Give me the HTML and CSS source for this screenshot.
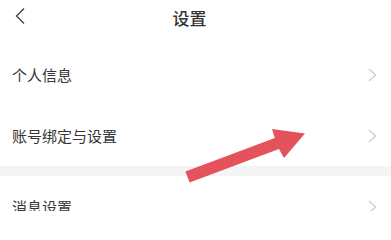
FILE: index.html
```html
<!DOCTYPE html>
<html lang="zh-CN">
<head>
<meta charset="utf-8">
<title>设置</title>
<link rel="stylesheet" href="styles.css">
</head>
<body>
<div class="page">
  <header class="topbar">
    <span class="back">
      <svg width="12" height="18" viewBox="0 0 12 18"><polyline points="10,1.5 2.5,9 10,16.5" fill="none" stroke="#4a4a4a" stroke-width="1.5" stroke-linejoin="miter"/></svg>
    </span>
    <h1 class="title">设置</h1>
    <span></span>
  </header>
  <section class="group">
    <div class="row"><span class="label">个人信息</span><svg class="chev" width="9" height="14" viewBox="0 0 9 14"><polyline points="1,1 7.5,7 1,13" fill="none" stroke="#cfcfcf" stroke-width="1.4"/></svg></div>
    <div class="row"><span class="label">账号绑定与设置</span><svg class="chev" width="9" height="14" viewBox="0 0 9 14"><polyline points="1,1 7.5,7 1,13" fill="none" stroke="#cfcfcf" stroke-width="1.4"/></svg></div>
  </section>
  <div class="gap"></div>
  <section class="group">
    <div class="row"><span class="label">消息设置</span><svg class="chev" width="9" height="14" viewBox="0 0 9 14"><polyline points="1,1 7.5,7 1,13" fill="none" stroke="#cfcfcf" stroke-width="1.4"/></svg></div>
  </section>
  <svg class="pointer" width="391" height="211" viewBox="0 0 391 211">
    <polygon points="185.4,171.4 274.8,137.9 272,129 305,133.5 284,158 279,149.1 189.6,182.6" fill="#e4525b"/>
  </svg>
</div>
</body>
</html>
```
FILE: styles.css
```css
html, body {
  margin: 0;
  padding: 0;
  background: #ffffff;
}
body {
  font-family: "Noto Sans CJK SC", "Noto Sans", sans-serif;
  color: #3a3a3a;
  width: 391px;
  height: 211px;
  overflow: hidden;
}
.page {
  position: relative;
  width: 391px;
  height: 211px;
  overflow: hidden;
}
.topbar {
  height: 44px;
  display: grid;
  grid-template-columns: 48px 1fr 60px;
  align-items: start;
}
.back {
  display: flex;
  align-items: center;
  padding-left: 14px;
  height: 31px;
}
.title {
  margin: 0;
  font-size: 17px;
  font-weight: 500;
  text-align: center;
  color: #333333;
  line-height: 35px;
}
.row {
  height: 61px;
  display: flex;
  align-items: center;
  justify-content: space-between;
  padding: 0 14px 0 12px;
}
.label {
  font-size: 15px;
  color: #363636;
  line-height: 20px;
}
.chev {
  display: block;
}
.gap {
  height: 10px;
  background: #f4f4f4;
}
.pointer {
  position: absolute;
  left: 0;
  top: 0;
}
```
